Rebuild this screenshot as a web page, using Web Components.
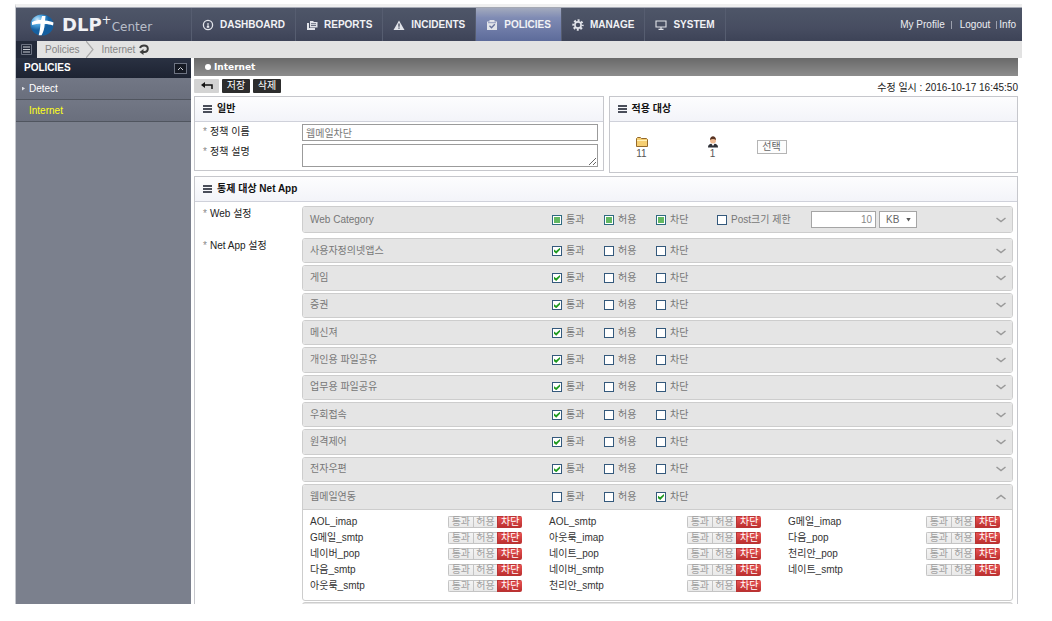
<!DOCTYPE html>
<html lang="ko">
<head>
<meta charset="utf-8">
<title>DLP+ Center</title>
<style>
  html { height: 100%; }
  body {
    margin: 0;
    height: 100%;
    background: #fff;
    color: #222;
    font: 10px/16px "Liberation Sans", "Noto Sans CJK KR", sans-serif;
  }
</style>
</head>
<body>
<dlp-app></dlp-app>

<script>
const define = (name, html, setup) => {
  const template = document.createElement('template');
  template.innerHTML = html;
  customElements.define(name, class extends HTMLElement {
    constructor() {
      super();
      this.attachShadow({ mode: 'open' });
    }
    connectedCallback() {
      if (this.shadowRoot.childNodes.length) return;
      this.shadowRoot.append(template.content.cloneNode(true));
      if (setup) setup(this, this.shadowRoot);
    }
  });
};

/* ---------- icons ---------- */
const ICONS = {
  dashboard: '<circle cx="6" cy="6" r="4.6" fill="none" stroke="currentColor" stroke-width="1.3"/><path d="M6 4v3" stroke="currentColor" stroke-width="1.2"/><path d="M4.800 7h2.400v1.800H4.800z" fill="currentColor"/>',
  reports: '<path d="M1 4h2v5h6v2H1z" fill="currentColor"/><path d="M4 2h3l1 1h3.500v5.500H4z" fill="currentColor"/><path d="M5 4.700h5M5 6.500h5" stroke="#4a5164" stroke-width=".8"/>',
  incidents: '<path d="M6 1.500l5.500 9.500H.5z" fill="currentColor"/><path d="M6 4.500v3.200M6 8.600v1.200" stroke="#3f4659" stroke-width="1.3"/>',
  policies: '<path d="M1 2.500h2.500V1h5v1.500H11V11H1z" fill="currentColor"/><path d="M3.500 6.800l2 2 3.300-3.600" fill="none" stroke="#66729b" stroke-width="1.3"/><path d="M2 3.700h8" stroke="#7c88b0" stroke-width=".8"/>',
  manage: '<circle cx="6" cy="6" r="4.7" fill="none" stroke="currentColor" stroke-width="2" stroke-dasharray="2 1.691" stroke-dashoffset="1"/><circle cx="6" cy="6" r="3.1" fill="none" stroke="currentColor" stroke-width="1.6"/>',
  system: '<path d="M1 2h10v6H1z" fill="none" stroke="currentColor" stroke-width="1.1"/><path d="M6 8v2M3.500 10.400h5" stroke="currentColor" stroke-width="1.2"/>'
};

/* ---------- top navigation ---------- */
define('dlp-nav-item', `
<style>
  :host { display: flex; border-right: 1px solid #565d70; }
  a {
    display: flex; align-items: center; gap: 6px; padding: 0 10px;
    color: #f1f2f5; font-weight: bold; text-decoration: none;
  }
  :host([active]) a { background: linear-gradient(#a3aabd, #7f8bb4 30%, #5d6b9a); }
  svg { width: 12px; height: 12px; color: #e2e4ea; }
</style>
<a href="#"><svg viewBox="0 0 12 12"></svg><slot></slot></a>`,
(host, root) => { root.querySelector('svg').innerHTML = ICONS[host.getAttribute('icon')]; });

define('dlp-header', `
<style>
  :host {
    display: flex; height: 33px; color: #f1f2f5;
    background: linear-gradient(#4e5668, #474d61 60%, #3d4357);
  }
  .brand {
    box-sizing: border-box; width: 176px; padding-left: 14px;
    display: flex; align-items: center; border-right: 1px solid #565d70;
    color: inherit; text-decoration: none; font-family: "DejaVu Sans", sans-serif;
  }
  .brand svg { width: 24px; height: 24px; margin-right: 8px; }
  .brand b { font-size: 18px; }
  .brand sup { align-self: flex-start; padding-top: 4px; font-size: 12px; vertical-align: baseline; }
  .brand span { padding-top: 4px; font-size: 12px; color: #b9bec9; }
  nav { display: flex; flex: 1; }
  .user { display: flex; align-items: center; gap: 6px; padding-right: 6px; }
  .user a { color: #eceef2; text-decoration: none; }
  .user a:not(:first-child) { display: flex; align-items: center; gap: 8px; }
  .user a:last-child { gap: 2px; }
  .user a:not(:first-child)::before { content: ""; width: 1px; height: 8px; background: #9ba0ad; }
</style>
<a class="brand" href="#">
  <svg viewBox="0 0 24 24">
    <defs><radialGradient id="globe" cx="30%" cy="25%"><stop offset="0" stop-color="#cfe9fb"/><stop offset=".5" stop-color="#4aa3de"/><stop offset="1" stop-color="#155f9f"/></radialGradient></defs>
    <ellipse cx="12" cy="12" rx="11.500" ry="10.500" fill="url(#globe)"/>
    <path d="M2 9c3-1.500 6-2 9-2l1-4h3.500l-.5 4.500c3.500.3 6 1 8.500 2l-.5 3c-3-1-5.500-1.500-8.300-1.500-.2 4.500-1.200 8-3.200 11.300h-2.800c1-4 1.500-7.500 1.800-11.600-2.500 0-5.500.3-8.500 1.300z" fill="#fff"/>
  </svg>
  <b>DLP</b><sup>+</sup><span>Center</span>
</a>
<nav>
  <dlp-nav-item icon="dashboard">DASHBOARD</dlp-nav-item>
  <dlp-nav-item icon="reports">REPORTS</dlp-nav-item>
  <dlp-nav-item icon="incidents">INCIDENTS</dlp-nav-item>
  <dlp-nav-item icon="policies" active>POLICIES</dlp-nav-item>
  <dlp-nav-item icon="manage">MANAGE</dlp-nav-item>
  <dlp-nav-item icon="system">SYSTEM</dlp-nav-item>
</nav>
<div class="user">
  <a href="#">My Profile</a><a href="#">Logout</a><a href="#">Info</a>
</div>`);

define('dlp-breadcrumb', `
<style>
  :host { display: flex; align-items: center; height: 17px; background: #e2e2e2; }
  button { align-self: stretch; width: 21px; padding: 0; border: 0; background: #232a3a; color: #c9ccd3; }
  button svg { display: block; width: 11px; height: 11px; margin: auto; }
  a { color: #858585; text-decoration: none; }
  .first { margin-left: 8px; }
  .arrow { width: 8px; height: 17px; margin: 0 7px; }
  .reload { width: 12px; height: 12px; margin-left: 3px; }
</style>
<button aria-label="menu"><svg viewBox="0 0 11 11"><path d="M.5.5h10v10H.5z" fill="none" stroke="#6d7382"/><path d="M2 3h7M2 5.500h7M2 8h7" stroke="currentColor"/></svg></button>
<a class="first" href="#">Policies</a>
<svg class="arrow" viewBox="0 0 8 17"><path d="M0 0l7 8.500L0 17" fill="none" stroke="#a9a9a9" stroke-width="1.200"/></svg>
<a href="#">Internet</a>
<svg class="reload" viewBox="0 0 12 12"><path d="M2 4c.8-2 2.500-2.500 4-2.500 5 0 5 6.500.5 6.500H5" fill="none" stroke="#3c3c3c" stroke-width="2"/><path d="M5.500 5v6L1.500 8z" fill="#3c3c3c"/></svg>`);

/* ---------- side menu ---------- */
define('dlp-sidebar', `
<style>
  :host { display: block; background: #7b808d; }
  header {
    display: flex; align-items: center; justify-content: space-between;
    box-sizing: border-box; height: 20px; padding: 0 4px 0 8px;
    background: linear-gradient(#2a3142, #1d2332); color: #fff; font-weight: bold;
  }
  button { width: 13px; height: 11px; padding: 0; border: 1px solid #6d7382; background: #161a24; }
  button svg { display: block; width: 7px; height: 5px; margin: auto; }
  a {
    display: flex; align-items: center; gap: 4px; box-sizing: border-box;
    height: 22px; padding-left: 6px; color: #fff; text-decoration: none;
    background: linear-gradient(#727785, #6a6f7d);
    border-bottom: 1px solid #50555f;
  }
  a::before { content: ""; width: 3px; height: 4px; background: #dfe1e6; clip-path: polygon(0 0, 100% 50%, 0 100%); }
  a.current { color: #ffff1a; }
  a.current::before { background: none; }
</style>
<header>POLICIES<button aria-label="collapse"><svg viewBox="0 0 7 5"><path d="M1 4l2.500-2.500L6 4" fill="none" stroke="#cfd2d8"/></svg></button></header>
<nav><a href="#">Detect</a><a class="current" href="#">Internet</a></nav>`);

/* ---------- panels and form rows ---------- */
define('dlp-panel', `
<style>
  :host { display: block; box-sizing: border-box; border: 1px solid #c6c7cc; background: #fff; }
  h2 {
    display: flex; align-items: center; gap: 5px; box-sizing: border-box;
    height: 25px; margin: 0; padding-left: 8px; border-bottom: 1px solid #cfd1da;
    background: linear-gradient(#fdfdfe, #f3f4f9); font-size: 10px; color: #111;
  }
  svg { width: 9px; height: 8px; }
</style>
<h2><svg viewBox="0 0 9 8"><path d="M0 1h9M0 4h9M0 7h9" stroke="#4a4e5a" stroke-width="1.800"/></svg><slot name="title"></slot></h2>
<slot></slot>`);

define('dlp-field', `
<style>
  :host { display: grid; grid-template-columns: 99px minmax(0, 1fr); align-items: start; }
  .label { display: flex; gap: 4px; }
  .label::before { content: "*"; width: 3px; color: #8a8a8a; }
</style>
<div class="label"><slot name="label"></slot></div>
<div><slot></slot></div>`);

define('dlp-check', `
<style>
  :host { display: block; }
  label { display: flex; align-items: center; gap: 4px; white-space: nowrap; color: #777; }
  input {
    appearance: none; box-sizing: border-box; width: 10px; height: 10px; margin: 0;
    border: 1px solid #34597c; background: #fff;
    display: grid; place-items: center;
  }
  input:indeterminate { border-color: #2f6a80; }
  input:indeterminate::before { content: ""; width: 6px; height: 6px; background: #62b862; }
  input:checked::before {
    content: ""; width: 6px; height: 6px; background: #1f9a1f;
    clip-path: polygon(0 30%, 35% 55%, 100% 0, 100% 35%, 38% 100%, 0 70%);
  }
</style>
<label><input type="checkbox"><slot></slot></label>`,
(host, root) => {
  const input = root.querySelector('input');
  input.checked = host.hasAttribute('checked');
  input.indeterminate = host.hasAttribute('mixed');
});

define('dlp-rule', `
<style>
  :host { display: block; box-sizing: border-box; border: 1px solid #cdcdcd; border-radius: 3px; background: #fff; overflow: hidden; }
  header {
    display: grid; grid-template-columns: 242px 52px 52px 61px 1fr 10px; align-items: center;
    box-sizing: border-box; height: 100%; min-height: 22px; padding: 0 6px 0 7px;
    background: #e5e5e5; color: #777;
  }
  :host([tall]) header, :host([open]) header { height: 25px; }
  :host([open]) header { border-bottom: 1px solid #cdcdcd; }
  button { width: 10px; height: 10px; padding: 0; border: 0; background: none; }
  svg { display: block; width: 10px; height: 10px; }
  :host([open]) svg { transform: scaleY(-1); }
</style>
<header>
  <span></span>
  <dlp-check>통과</dlp-check><dlp-check>허용</dlp-check><dlp-check>차단</dlp-check>
  <div><slot name="extra"></slot></div>
  <button aria-label="toggle"><svg viewBox="0 0 10 10"><path d="M.5 3l4.500 3.500L9.500 3" fill="none" stroke="#999" stroke-width="1.500"/></svg></button>
</header>
<slot></slot>`,
(host, root) => {
  root.querySelector('span').textContent = host.getAttribute('name');
  const state = host.getAttribute('state');
  root.querySelectorAll('dlp-check').forEach((check, i) => {
    const input = check.shadowRoot.querySelector('input');
    input.indeterminate = state === 'mixed';
    input.checked = state === String(i);
  });
});

define('dlp-action', `
<style>
  :host { display: flex; align-items: center; justify-content: space-between; height: 16px; color: #333; }
  div { display: flex; box-sizing: border-box; width: 74px; height: 12px; border-radius: 2px; overflow: hidden; }
  button {
    flex: 1; box-sizing: border-box; padding: 0; border: 1px solid #c4c4c4; border-right-width: 0;
    background: linear-gradient(#f4f4f4, #e9e9e9); color: #a0a0a0; font: inherit; line-height: 10px;
  }
  .on { border-color: #b93434; background: linear-gradient(#e65353, #bd3030); color: #fff; }
</style>
<slot></slot>
<div><button>통과</button><button>허용</button><button class="on">차단</button></div>`);

/* ---------- page ---------- */
const RULES = ['사용자정의넷앱스', '게임', '증권', '메신져', '개인용 파일공유', '업무용 파일공유', '우회접속', '원격제어', '전자우편'];
const MAIL_APPS = [
  'AOL_imap', 'AOL_smtp', 'G메일_imap', 'G메일_smtp', '아웃룩_imap', '다음_pop', '네이버_pop',
  '네이트_pop', '천리안_pop', '다음_smtp', '네이버_smtp', '네이트_smtp', '아웃룩_smtp', '천리안_smtp'
];

define('dlp-app', `
<style>
  :host { display: flex; flex-direction: column; box-sizing: border-box; height: 100vh; padding: 4px 30px 17px 15px; }
  .frame {
    display: flex; flex-direction: column; flex: 1; min-height: 0; overflow: hidden;
    border-top: 3px solid #efefef; border-left: 1px solid #c4c6cc;
  }
  dlp-header { border-top: 1px solid #a4a8b3; }
  dlp-header, dlp-breadcrumb { flex: none; }
  .columns { display: grid; grid-template-columns: 175px minmax(0, 1fr); gap: 3px; flex: 1; min-height: 0; }
  main { padding-right: 4px; min-width: 0; overflow: hidden; }
  h1 {
    display: flex; align-items: center; gap: 3px; box-sizing: border-box; height: 18px; margin: 0; padding-left: 11px;
    background: linear-gradient(#696969, #8d8d8d); color: #fff; font: bold 9px/18px "DejaVu Sans", sans-serif;
  }
  h1::before { content: ""; width: 6px; height: 6px; border-radius: 50%; background: #fff; }
  .tools { display: flex; align-items: center; gap: 3px; height: 20px; }
  .tools button { box-sizing: border-box; height: 14px; padding: 0 4px; border: 0; border-radius: 1px; background: #2d2d2d; color: #fff; font: inherit; line-height: 14px; width: 28px; }
  .tools .back { width: 25px; background: #d3d3d3; }
  .back svg { display: block; width: 12px; height: 8px; margin: auto; }
  time { margin-left: auto; padding-top: 3px; }
  .pair { display: grid; grid-template-columns: 1fr 1fr; gap: 5px; align-items: start; margin-bottom: 3px; }
  .form { display: grid; gap: 3px; padding: 2px 5px 3px 8px; }
  .form input, .form textarea {
    display: block; box-sizing: border-box; width: 100%; margin: 0; padding: 0 3px;
    border: 1px solid #9b9b9b; border-radius: 0; background: #fff; color: #777; font: inherit;
  }
  .form input { height: 17px; }
  .form textarea { height: 23px; }
  .target { display: flex; align-items: center; height: 50px; padding-left: 22px; }
  .count { display: grid; justify-items: center; width: 20px; margin-right: 51px; line-height: 11px; color: #555; }
  .count svg { width: 14px; height: 12px; }
  .target button { margin-left: -17px; width: 30px; height: 14px; padding: 0; border: 1px solid #b5b5b5; background: #fdfdfd; color: #666; font: inherit; line-height: 12px; }
  .rules { display: grid; gap: 5px; padding: 4px 4px 0 8px; }
  .extra { display: flex; align-items: center; }
  .extra dlp-check { width: 94px; }
  .extra input {
    box-sizing: border-box; width: 65px; height: 17px; padding: 0 3px; border: 1px solid #a5a5a5;
    color: #888; font: inherit; text-align: right; margin-right: 3px;
  }
  .unit { display: grid; align-items: center; width: 38px; }
  .unit select {
    grid-area: 1 / 1; appearance: none; box-sizing: border-box; height: 17px; padding: 0 6px;
    border: 1px solid #a5a5a5; border-radius: 0; background: #fff; color: #666; font: inherit;
  }
  .unit::after {
    content: ""; grid-area: 1 / 1; justify-self: end; width: 5px; height: 4px; margin-right: 6px;
    background: #555; clip-path: polygon(0 0, 100% 0, 50% 100%); pointer-events: none;
  }
  .list { display: grid; grid-auto-rows: 1fr; gap: 2px; min-height: 244px; margin-bottom: 2px; }
  .apps { display: grid; grid-template-columns: repeat(3, 1fr); column-gap: 27px; padding: 4px 12px 6px 7px; }
  .open { margin-bottom: 1px; }
  .next { height: 26px; border: 1px solid #cdcdcd; border-radius: 3px; background: #e5e5e5; }
</style>
<div class="frame">
  <dlp-header></dlp-header>
  <dlp-breadcrumb></dlp-breadcrumb>
  <div class="columns">
    <dlp-sidebar></dlp-sidebar>
    <main>
      <h1>Internet</h1>
      <div class="tools">
        <button class="back" aria-label="back"><svg viewBox="0 0 12 8"><path d="M3 3h8v4" fill="none" stroke="#111" stroke-width="1.500"/><path d="M0 3l4-3v6z" fill="#111"/></svg></button>
        <button>저장</button><button>삭제</button>
        <time>수정 일시 : 2016-10-17 16:45:50</time>
      </div>
      <div class="pair">
        <dlp-panel>
          <span slot="title">일반</span>
          <div class="form">
            <dlp-field><label slot="label" for="name">정책 이름</label><input id="name" value="웹메일차단"></dlp-field>
            <dlp-field><label slot="label" for="desc">정책 설명</label><textarea id="desc"></textarea></dlp-field>
          </div>
        </dlp-panel>
        <dlp-panel>
          <span slot="title">적용 대상</span>
          <div class="target">
            <div class="count"><svg viewBox="0 0 14 12"><path d="M1.500 10.500v-8l1-1h3l1 1h5l1 1v7z" fill="#f6cf72" stroke="#94692b"/><path d="M2 4.500h10" stroke="#fff0b8"/></svg>11</div>
            <div class="count"><svg viewBox="0 0 14 12"><path d="M2 11.500c0-3 2-4 5-4s5 1 5 4z" fill="#2f3138"/><path d="M5 7l2 3 2-3z" fill="#fff"/><circle cx="7" cy="4.500" r="3" fill="#efbb94"/><path d="M4 4c0-5 6-5 6 0C8 2.500 6 2.500 4 4z" fill="#5a3422"/></svg>1</div>
            <button>선택</button>
          </div>
        </dlp-panel>
      </div>
      <dlp-panel>
        <span slot="title">통제 대상 Net App</span>
        <div class="rules">
          <dlp-field>
            <span slot="label">Web 설정</span>
            <dlp-rule tall name="Web Category" state="mixed">
              <div class="extra" slot="extra">
                <dlp-check>Post크기 제한</dlp-check>
                <input value="10" aria-label="Post크기">
                <div class="unit"><select aria-label="단위"><option>KB</option></select></div>
              </div>
            </dlp-rule>
          </dlp-field>
          <dlp-field>
            <span slot="label">Net App 설정</span>
            <div class="list">${RULES.map(name => `<dlp-rule name="${name}" state="0"></dlp-rule>`).join('')}</div>
            <dlp-rule class="open" open name="웹메일연동" state="2">
              <div class="apps">${MAIL_APPS.map(name => `<dlp-action>${name}</dlp-action>`).join('')}</div>
            </dlp-rule>
            <div class="next"></div>
          </dlp-field>
        </div>
      </dlp-panel>
    </main>
  </div>
</div>`);
</script>
</body>
</html>
